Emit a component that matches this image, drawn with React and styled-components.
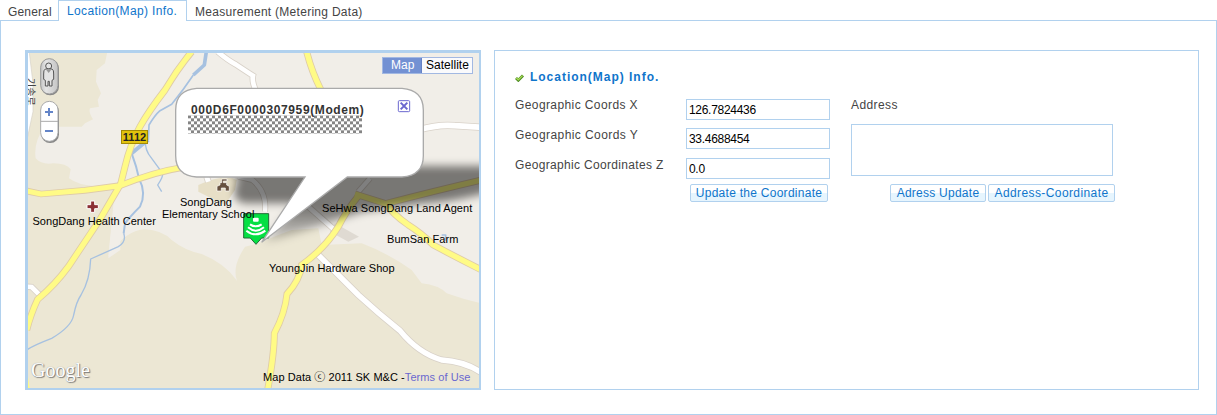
import React from "react";
import styled, { createGlobalStyle } from "styled-components";

const line = "#b1d1ee";
const blue = "#0f75cb";
const ui = `"Liberation Sans", "Noto Sans CJK KR", sans-serif`;

const Global = createGlobalStyle`
  * { box-sizing: border-box; }
  body { margin: 0; background: #fff; font: 12px/14px ${ui}; color: #444; }
`;

const Page = styled.div`
  display: flex;
  flex-direction: column;
  width: 1217px;
  height: 415px;
`;

const Tabs = styled.nav`
  display: flex;
  height: 21px;
  margin-bottom: -1px;
`;

const Tab = styled.div`
  position: relative;
  width: ${(p) => p.$w}px;
  height: ${(p) => (p.$active ? 21 : 20)}px;
  padding: ${(p) => (p.$active ? "3px 0 0 8px" : "5px 0 0 8px")};
  border: ${(p) => (p.$active ? `1px solid ${line}` : "0")};
  border-bottom: 0;
  background: #fff;
  color: ${(p) => (p.$active ? blue : "#444")};
  letter-spacing: ${(p) => p.$ls}px;
  white-space: nowrap;
`;

const Body = styled.main`
  display: flex;
  gap: 13px;
  flex: 1;
  padding: 29px 17px 24px 24px;
  border: 1px solid ${line};
`;

const MapFrame = styled.section`
  position: relative;
  width: 456px;
  height: 340px;
  border: solid ${line};
  border-width: 3px 2px 2px 3px;
  overflow: hidden;
  color: #000;
  font-size: 11px;
  line-height: 12px;
`;

const MapArt = styled.svg`
  display: block;
  width: 451px;
  height: 335px;
`;

const Label = styled.div`
  position: absolute;
  left: ${(p) => p.$x}px;
  top: ${(p) => p.$y}px;
  letter-spacing: ${(p) => p.$ls || 0}px;
  text-align: center;
  white-space: nowrap;
`;

const Vertical = styled(Label)`
  writing-mode: vertical-rl;
  font: 10px/10px "Noto Sans CJK KR", sans-serif;
  text-orientation: sideways;
  color: #444;
`;

const Route = styled(Label)`
  width: 27px;
  height: 14px;
  border: 1px solid #a38a06;
  background: #e2c20c;
  color: #222;
  font-weight: bold;
  line-height: 13px;
`;

const MapTypes = styled.div`
  position: absolute;
  top: 4px;
  left: 354px;
  display: flex;
  width: 91px;
  height: 17px;
  border: 1px solid #a2b8e2;
  font-size: 12px;
  line-height: 15px;
`;

const MapType = styled.div`
  flex: ${(p) => (p.$on ? "0 0 39px" : "1")};
  padding-left: ${(p) => (p.$on ? 8 : 4)}px;
  background: ${(p) => (p.$on ? "#7391d3" : "#fafafc")};
  color: ${(p) => (p.$on ? "#fff" : "#000")};
  letter-spacing: ${(p) => (p.$on ? 0 : 0.02)}px;
  border-right: ${(p) => (p.$on ? "1px solid #6682c4" : "0")};
`;

const BubbleTitle = styled(Label)`
  color: #333;
  font-size: 12px;
  line-height: 14px;
  font-weight: bold;
`;

const Logo = styled(Label)`
  font: 20px/24px "Liberation Serif", serif;
  color: #fff;
  text-shadow: 1px 1px 1px #777, 0 0 1px #999;
`;

const Credits = styled(Label)`
  span { color: #6a67cf; }
`;

const Panel = styled.section`
  width: 705px;
  height: 340px;
  padding: 19px 20px;
  border: 1px solid ${line};
`;

const Heading = styled.h2`
  display: flex;
  align-items: center;
  gap: 6px;
  height: 14px;
  margin: 0 0 10px;
  color: ${blue};
  font-size: 12px;
  line-height: 14px;
  letter-spacing: 0.98px;
`;

const Check = styled.svg`
  width: 9px;
  height: 8px;
  margin-top: 2px;
`;

const Columns = styled.div`
  display: flex;
  gap: 21px;
`;

const Fields = styled.div`
  width: 315px;
`;

const Field = styled.label`
  display: flex;
  justify-content: space-between;
  height: ${(p) => p.$h}px;
`;

const Caption = styled.span`
  padding-top: ${(p) => p.$pt || 4}px;
  letter-spacing: ${(p) => p.$ls}px;
`;

const Input = styled.input`
  width: 144px;
  height: 21px;
  margin: 5px 0 0;
  padding: 1px 2px 0;
  border: 1px solid ${line};
  border-radius: 0;
  outline: 0;
  color: #000;
  font: 12px ${ui};
  letter-spacing: -0.3px;
`;

const Address = styled.div`
  width: 264px;
`;

const Area = styled.textarea`
  display: block;
  width: 262px;
  height: 52px;
  margin: 12px 0 8px;
  border: 1px solid ${line};
  resize: none;
`;

const Buttons = styled.div`
  display: flex;
  justify-content: flex-end;
  gap: 2px;
  padding-right: ${(p) => p.$pr || 0}px;
`;

const Button = styled.button`
  width: ${(p) => p.$w}px;
  height: 18px;
  padding: 0;
  border: 1px solid ${line};
  border-radius: 2px;
  background: linear-gradient(#fff 0 48%, #e6f5fe 48%);
  color: ${blue};
  font: 12px/15px ${ui};
  letter-spacing: ${(p) => p.$ls}px;
  white-space: nowrap;
`;

const roads = [
  ["M500 5 Q455 60 420 120 Q370 185 345 230 Q315 285 300 350 L287 402", 16],
  ["M5 423 L48 432 L180 421 L285 407 Q390 365 475 352", 15],
  ["M287 402 L225 508 L130 650 Q90 705 38 748 Q18 790 5 840", 16],
  ["M845 5 Q860 65 888 120", 16],
  ["M1370 390 Q1240 420 1085 460", 16],
  ["M990 432 L1085 462 Q1100 490 1150 525 Q1190 550 1225 585 Q1300 625 1370 660", 16],
  ["M1002 436 Q965 480 940 530 Q900 595 830 645 Q825 690 786 732 Q780 790 748 850 Q748 910 728 1020", 16],
];
const lanes = [
  ["M578 5 Q610 32 632 43 Q665 65 684 77 Q680 95 694 125", 14],
  ["M1180 240 Q1240 222 1290 227 L1375 232", 17],
  ["M878 613 Q955 690 1000 735 Q1060 790 1125 842 Q1180 910 1250 930 Q1325 935 1375 972", 16],
  ["M5 710 L20 711 L42 733", 14],
  ["M640 380 L682 390 Q726 425 720 485", 13],
  ["M1035 385 L1000 425", 13],
  ["M545 380 L550 395", 15],
  ["M850 470 L935 545", 14],
];

function MapDrawing() {
  return (
    <MapArt viewBox="9 9 1353 1005">
      <defs>
        <filter id="soft" x="-10%" y="-30%" width="120%" height="160%"><feGaussianBlur stdDeviation="13" /></filter>
        <linearGradient id="shade" x1="0" x2="0" y1="0" y2="1">
          <stop offset="0" stopOpacity=".5" /><stop offset=".55" stopOpacity=".5" /><stop offset="1" stopOpacity=".12" />
        </linearGradient>
        <linearGradient id="knob" x1="0" x2="1"><stop offset="0" stopColor="#c4c4c4" /><stop offset=".3" stopColor="#e5e5e5" /><stop offset="1" stopColor="#c4c4c4" /></linearGradient>
        <pattern id="dots" x="489" y="196" width="18" height="18" patternUnits="userSpaceOnUse">
          <rect width="18" height="18" fill="#fff" /><path fill="#858585" d="M0 0h9v9H0zM9 9h9v9H9z" />
        </pattern>
      </defs>
      <rect width="1370" height="1020" fill="#f1eee8" />
      <g fill="#ece7d4">
        <path d="M0 0H248L240 40L215 60L213 95L228 130L218 150L222 170L195 175Q190 185 204 208L180 220L170 230H100L55 235Q25 280 32 325Q50 345 85 340Q125 340 137 358L132 385Q160 405 205 408L270 413L250 620Q300 540 360 538Q410 540 440 570Q480 602 530 612Q600 640 636 692Q620 650 660 590L700 580L760 555L800 540L880 535L890 585L1010 580Q1090 610 1160 660L1190 700Q1240 705 1265 730Q1320 750 1370 760V1020H0Z" />
        <path d="M520 405Q600 370 635 390L630 420L600 465L520 425Z" fill="#e7dfc7" />
      </g>
      <path d="M272 415L250 625L286 600L285 535L305 495L270 470Z" fill="#f1eee8" />
      <path d="M0 0H12L24 100V185L8 260H0Z" fill="#fff" stroke="#d7d2c8" strokeWidth="2" />
      <path d="M930 520L1002 560L970 575L915 545Z" fill="#dfdad2" />
      <g fill="none" stroke="#a6c1e0" strokeLinejoin="round">
        <path d="M544 5L538 45L505 75" strokeWidth="11" />
        <path d="M505 75Q475 120 440 163L405 182Q390 195 372 225L370 270" strokeWidth="5" />
        <path d="M370 270L350 285L320 310" strokeWidth="12" />
        <path d="M320 310Q335 350 342 385Q365 430 345 470Q315 500 300 520L296 550" strokeWidth="6" />
        <path d="M296 550Q305 575 280 590L197 627Q195 690 168 735Q154 755 146 795Q140 830 80 865Q28 885 8 898" strokeWidth="4" />
        <path d="M362 270Q358 300 380 325L413 370Q415 380 398 405L410 425" strokeWidth="4" />
        <path d="M1250 555H1262V572" strokeWidth="5" />
      </g>
      {lanes.map(([d, w]) => <path key={d} d={d} fill="none" stroke="#d8d1c8" strokeWidth={w + 5} />)}
      {lanes.map(([d, w]) => <path key={d} d={d} fill="none" stroke="#fff" strokeWidth={w} />)}
      {roads.map(([d, w]) => <path key={d} d={d} fill="none" stroke="#dfcba8" strokeWidth={w + 5} />)}
      {roads.map(([d, w]) => <path key={d} d={d} fill="none" stroke="#fffb86" strokeWidth={w} strokeLinejoin="round" />)}
      <path d="M9 980l6 40H9z" fill="#fffb86" />

      <path d="M585 348H1420V415Q1340 450 1180 462L1010 485L760 568L715 578L815 460H660Q610 455 640 385Z" fill="url(#shade)" filter="url(#soft)" />

      <path d="M656 491H731V564H710L693 583L676 564H656Z" fill="#05df43" stroke="#246b38" strokeWidth="3" />
      <g fill="none" stroke="#fff" strokeWidth="6">
        <path d="M675 523Q692 535 710 523M669 532Q692 552 717 532M664 542Q692 564 721 542" />
        <rect x="684" y="503" width="17" height="12" rx="3" fill="#fff" stroke="none" />
      </g>
      <path d="M515 115H1131Q1195 120 1195 180V317Q1195 376 1131 381H967L710 577L840 381H515Q452 376 452 317V180Q452 120 515 115Z" fill="#fff" stroke="#aaa" strokeWidth="4" />
      <rect x="489" y="196" width="522" height="55" fill="url(#dots)" />
      <g fill="none" stroke="#6a67cf" strokeWidth="3">
        <rect x="1120" y="152" width="34" height="33" rx="3" />
        <path d="M1127 158L1147 178M1147 158L1127 178" strokeWidth="6" />
      </g>

      <path d="M197 453h12v11h11v12h-11v11h-12v-11h-11v-12h11z" fill="#8b3035" stroke="#fff" strokeWidth="3" />
      <path d="M576 423V409L585 405V398H590V387H606V393H595V398H605V405L613 409V423H601V414H589V423Z" fill="#67513f" stroke="#fff" strokeWidth="2" />

      <rect x="49" y="29" width="53" height="107" rx="26" fill="#888" />
      <rect x="47" y="26" width="52" height="106" rx="26" fill="url(#knob)" stroke="#999" strokeWidth="3" />
      <g fill="#e4e4e4" stroke="#555" strokeWidth="3">
        <circle cx="71" cy="48" r="9" />
        <path d="M61 57H81Q87 60 86 72V88L81 91V108H73V94H69V108H61V91L56 88V72Q55 60 61 57Z" />
      </g>
      <path d="M64 60H78L71 69Z" fill="#999" />
      <rect x="49" y="158" width="53" height="121" rx="26" fill="#888" />
      <rect x="47" y="154" width="52" height="120" rx="26" fill="#fff" stroke="#aaa" strokeWidth="3" />
      <path d="M47 214H99" stroke="#aaa" strokeWidth="3" />
      <path d="M60 186H84M72 174V198M60 243H84" stroke="#6485c8" strokeWidth="6" />
    </MapArt>
  );
}

export default function App() {
  return (
    <Page>
      <Global />
      <Tabs>
        <Tab $w={58} $ls={0.15}>General</Tab>
        <Tab $w={129} $active $ls={0.36}>Location(Map) Info.</Tab>
        <Tab $w={190} $ls={0.28}>Measurement (Metering Data)</Tab>
      </Tabs>
      <Body>
        <MapFrame>
          <MapDrawing />
          <Vertical $x={-2} $y={25}>기송로</Vertical>
          <Route $x={93} $y={77}>1112</Route>
          <BubbleTitle $x={163} $y={50} $ls={0.61}>000D6F0000307959(Modem)</BubbleTitle>
          <Label $x={4.5} $y={162} $ls={0.02}>SongDang Health Center</Label>
          <Label $x={152} $y={143}>SongDang</Label>
          <Label $x={134} $y={155}>Elementary School</Label>
          <Label $x={294} $y={149} $ls={0.04}>SeHwa SongDang Land Agent</Label>
          <Label $x={359} $y={180} $ls={0.04}>BumSan Farm</Label>
          <Label $x={241} $y={209} $ls={0.06}>YoungJin Hardware Shop</Label>
          <Logo $x={3} $y={305}>Google</Logo>
          <Credits $x={235} $y={318} $ls={0.06}>Map Data ⓒ 2011 SK M&amp;C -<span>Terms of Use</span></Credits>
          <MapTypes>
            <MapType $on>Map</MapType>
            <MapType>Satellite</MapType>
          </MapTypes>
        </MapFrame>
        <Panel>
          <Heading>
            <Check viewBox="0 0 9 8">
              <path d="M1 4L3.3 6.3L8 1.5" fill="none" stroke="#4c8a22" strokeWidth="2.8" />
              <path d="M1.3 4L3.3 5.8L7.6 1.6" fill="none" stroke="#a8dc55" strokeWidth="1.3" />
            </Check>
            Location(Map) Info.
          </Heading>
          <Columns>
            <Fields>
              <Field $h={29}><Caption $ls={0.4}>Geographic Coords X</Caption><Input defaultValue="126.7824436" /></Field>
              <Field $h={30}><Caption $ls={0.42} $pt={5}>Geographic Coords Y</Caption><Input defaultValue="33.4688454" /></Field>
              <Field $h={31}><Caption $ls={0.33} $pt={5}>Geographic Coordinates Z</Caption><Input defaultValue="0.0" /></Field>
              <Buttons $pr={2}><Button $w={138} $ls={0.27}>Update the Coordinate</Button></Buttons>
            </Fields>
            <Address>
              <Caption as="div" $ls={0.4}>Address</Caption>
              <Area aria-label="Address" />
              <Buttons><Button $w={96} $ls={0.25}>Adress Update</Button><Button $w={127} $ls={0.4}>Address-Coordinate</Button></Buttons>
            </Address>
          </Columns>
        </Panel>
      </Body>
    </Page>
  );
}
